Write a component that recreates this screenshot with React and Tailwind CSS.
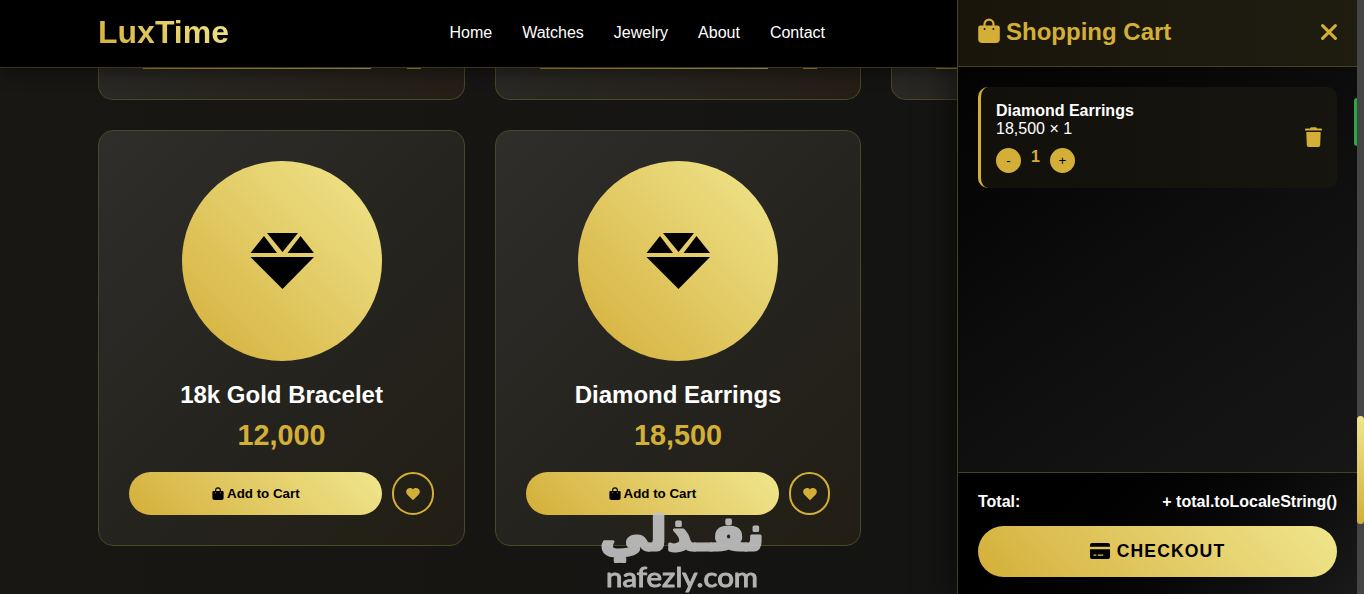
import React, { useState } from 'react';

const products = [
  { id: 1, name: '18k Gold Bracelet', price: 12000 },
  { id: 2, name: 'Diamond Earrings', price: 18500 },
];

const links = ['Home', 'Watches', 'Jewelry', 'About', 'Contact'];

const BagIcon = ({ className }) => (
  <svg viewBox="0 0 22 25" fill="currentColor" className={className}>
    <path d="M6.5 9V6.2a4.5 4.5 0 0 1 9 0V9" fill="none" stroke="currentColor" strokeWidth="2.2" />
    <path
      fillRule="evenodd"
      d="M2.500 7.500h17a2.300 2.300 0 0 1 2.300 2.300V21a4 4 0 0 1-4 4H4.200a4 4 0 0 1-4-4V9.800a2.300 2.300 0 0 1 2.300-2.300ZM6.600 10.100a1 1 0 1 0 0 2 1 1 0 0 0 0-2Zm8.800 0a1 1 0 1 0 0 2 1 1 0 0 0 0-2Z"
    />
  </svg>
);

const GemIcon = ({ className }) => (
  <svg viewBox="0 0 64 64" fill="currentColor" className={className}>
    <path d="M17 4h31L32.5 23ZM14 7l13 17H.5ZM50.5 7 64 24H37.500ZM.5 28H64L32.500 60Z" />
  </svg>
);

const HeartIcon = ({ className }) => (
  <svg viewBox="0 0 14 12" fill="currentColor" className={className}>
    <path d="M7 1.4C8.500-.4 11-.3 12.500 1c1.900 1.600 1.600 4.200 0 5.800L7.500 11.700a.7.7 0 0 1-1 0L1.500 6.800C-.1 5.200-.4 2.600 1.500 1 3-.3 5.500-.4 7 1.400Z" />
  </svg>
);

const TrashIcon = ({ className }) => (
  <svg viewBox="0 0 17 20" fill="currentColor" className={className}>
    <path d="M.9 1.400h4L5.900.2h5.200l1 1.200h4a.9.9 0 0 1 .9.900V3.600H0V2.300a.9.9 0 0 1 .9-.9ZM1.300 4.900h14.400L15.200 18a2 2 0 0 1-2 2H3.800a2 2 0 0 1-2-2Z" />
  </svg>
);

const CardIcon = ({ className }) => (
  <svg viewBox="0 0 20 16" fill="currentColor" className={className}>
    <path d="M2 0h16a2 2 0 0 1 2 2v1.700H0V2a2 2 0 0 1 2-2Z" />
    <path
      fillRule="evenodd"
      d="M0 6.300h20V14a2 2 0 0 1-2 2H2a2 2 0 0 1-2-2Zm3.500 5.300v1.200h2.800v-1.200Zm4.200 0v1.200h5.600v-1.200Z"
    />
  </svg>
);

const ProductCard = ({ product, onAdd }) => (
  <div className="h-[416px] rounded-[15px] border border-[#4b4824] bg-linear-135 from-[#2f2e2b] via-[#25241f] to-[#221e15] p-[30px] text-center">
    <div className="mx-auto flex size-[200px] items-center justify-center rounded-full bg-linear-45 from-[#d4af37] to-[#f0e68c] text-black">
      <GemIcon className="size-16" />
    </div>
    <h3 className="mt-5 text-2xl leading-7 font-bold text-white">{product.name}</h3>
    <div className="mt-[9px] text-[28.8px] leading-[34px] font-bold text-[#d4af37]">
      {product.price.toLocaleString('en-US')}
    </div>
    <div className="mt-5 flex gap-2.5">
      <button
        onClick={() => onAdd(product)}
        className="flex h-[43px] flex-1 items-center justify-center gap-[3px] rounded-full bg-linear-45 from-[#d4af37] to-[#f0e68c] text-[13.33px] font-bold text-black"
      >
        <BagIcon className="h-[13px] w-3" />
        Add to Cart
      </button>
      <button className="flex h-[43px] w-[41.500px] items-center justify-center rounded-full border-2 border-[#d4af37] text-[#d4af37]">
        <HeartIcon className="h-3 w-3.5" />
      </button>
    </div>
  </div>
);

// bottom edge of the row that has scrolled under the header
const CardBottom = () => (
  <div className="h-8 overflow-hidden rounded-b-[15px] border border-t-0 border-[#4b4824] bg-linear-to-r from-[#292824] to-[#241e16]">
    <div className="flex justify-between pr-[43px] pl-[44px]">
      <div className="h-px w-[228px] bg-linear-to-r from-[#a98a33] to-[#b8ad6c]" />
      <div className="h-px w-3.5 bg-[#a98a33]" />
    </div>
  </div>
);

const CartDrawer = ({ qty, setQty }) => (
  <aside className="relative z-20 flex w-[400px] shrink-0 flex-col overflow-hidden border-l border-[#45421f] bg-linear-145 from-[#020202] via-[#0f0f0f] to-[#1a1a1a] shadow-[-5px_0_30px_rgba(0,0,0,0.5)]">
    <div className="flex h-[67px] shrink-0 items-center justify-between border-b border-[#45421f] bg-linear-to-r from-[#1a150b] to-[#1e1d10] px-5 pb-[3px] text-[#d4af37]">
      <h3 className="flex items-center gap-1.5 text-2xl font-bold">
        <BagIcon className="mb-0.5 h-[25px] w-[22px]" />
        Shopping Cart
      </h3>
      <button>
        <svg viewBox="0 0 16 16" className="size-4" stroke="currentColor" strokeWidth="3" strokeLinecap="round">
          <path d="M1.600 1.600 14.400 14.400M14.400 1.600 1.600 14.400" />
        </svg>
      </button>
    </div>

    <div className="flex-1 p-5">
      <div className="flex h-[101px] items-center justify-between rounded-[10px] border-l-3 border-[#d4af37] bg-linear-to-r from-[#12100a] to-[#16150f] px-[15px]">
        <div className="text-base leading-[18px] text-white">
          <h4 className="font-bold">Diamond Earrings</h4>
          <p>18,500 × {qty}</p>
          <div className="mt-2.5 flex gap-2.5 text-[13.33px] text-black">
            <button onClick={() => setQty(Math.max(1, qty - 1))} className="size-[25px] rounded-full bg-[#d4af37]">
              -
            </button>
            <span className="w-[9px] text-base leading-[18px] font-bold text-[#d4af37]">{qty}</span>
            <button onClick={() => setQty(qty + 1)} className="size-[25px] rounded-full bg-[#d4af37]">
              +
            </button>
          </div>
        </div>
        <button className="mb-0.5 text-[#d4af37]">
          <TrashIcon className="h-5 w-[17px]" />
        </button>
      </div>
    </div>

    <div className="h-[122px] shrink-0 border-t border-[#45421f] bg-linear-135 from-black to-[#1a1a1a] px-5 pt-5">
      <div className="flex justify-between text-base leading-[18px] font-bold text-white">
        <span>Total:</span>
        <span>+ total.toLocaleString()</span>
      </div>
      <button className="mt-[15px] flex h-[51px] w-full items-center justify-center gap-[7px] rounded-full bg-linear-45 from-[#d4af37] to-[#f0e68c] text-[17.6px] font-bold tracking-[1.1px] text-black">
        <CardIcon className="mb-0.5 h-4 w-5" />
        CHECKOUT
      </button>
    </div>

    {/* toast sliding in from the right edge */}
    <div className="absolute top-[98px] right-0 h-12 w-[3px] rounded-l-full bg-[#28a745]" />
  </aside>
);

const Watermark = () => (
  <svg className="pointer-events-none absolute top-[500px] left-[590px] z-10" width="190" height="94" opacity="0.9">
    <g fill="#c4c4c4" stroke="#c4c4c4" strokeLinejoin="round">
      <text
        x="92"
        y="50"
        textAnchor="middle"
        textLength="164"
        lengthAdjust="spacingAndGlyphs"
        fontSize="48"
        fontWeight="bold"
        fontFamily="'DejaVu Sans', sans-serif"
        strokeWidth="3"
      >
        نفـذلي
      </text>
      <text
        x="16"
        y="87"
        textLength="152"
        lengthAdjust="spacingAndGlyphs"
        fontSize="26"
        fontFamily="Lato, sans-serif"
        strokeWidth="1"
      >
        nafezly.com
      </text>
    </g>
  </svg>
);

export default function App() {
  const [qty, setQty] = useState(1);

  return (
    <div className="relative flex h-[594px] w-full overflow-hidden bg-[#151513] font-['Liberation_Sans',Arial,sans-serif]">
      <div className="w-[957px] shrink-0 overflow-hidden bg-linear-to-r from-[#191714] to-[#141412]">
        <header className="relative flex h-17 items-center border-b border-[#d4af37]/30 bg-black pb-[3px] pl-[98px] shadow-[0_5px_15px_rgba(0,0,0,0.4)]">
          <div className="w-[351.500px] shrink-0">
            <span className="bg-linear-45 from-[#d4af37] to-[#f0e68c] bg-clip-text text-[32px] font-bold text-transparent">
              LuxTime
            </span>
          </div>
          <nav className="flex gap-[30px] pt-0.5">
            {links.map((link) => (
              <a key={link} href="#" className="text-base text-white">
                {link}
              </a>
            ))}
          </nav>
        </header>

        <main className="ml-[98.300px] grid w-[1159.500px] grid-cols-3 gap-x-[30px] gap-y-[30px]">
          <CardBottom />
          <CardBottom />
          <CardBottom />
          {products.map((product) => (
            <ProductCard key={product.id} product={product} onAdd={() => setQty(qty + 1)} />
          ))}
        </main>
      </div>

      <CartDrawer qty={qty} setQty={setQty} />

      {/* page scrollbar */}
      <div className="z-30 flex-1 bg-[#454545] pt-[416px]">
        <div className="h-[108px] rounded-[4px] bg-linear-to-t from-[#d4af37] to-[#f0e68c]" />
      </div>

      <Watermark />
    </div>
  );
}
